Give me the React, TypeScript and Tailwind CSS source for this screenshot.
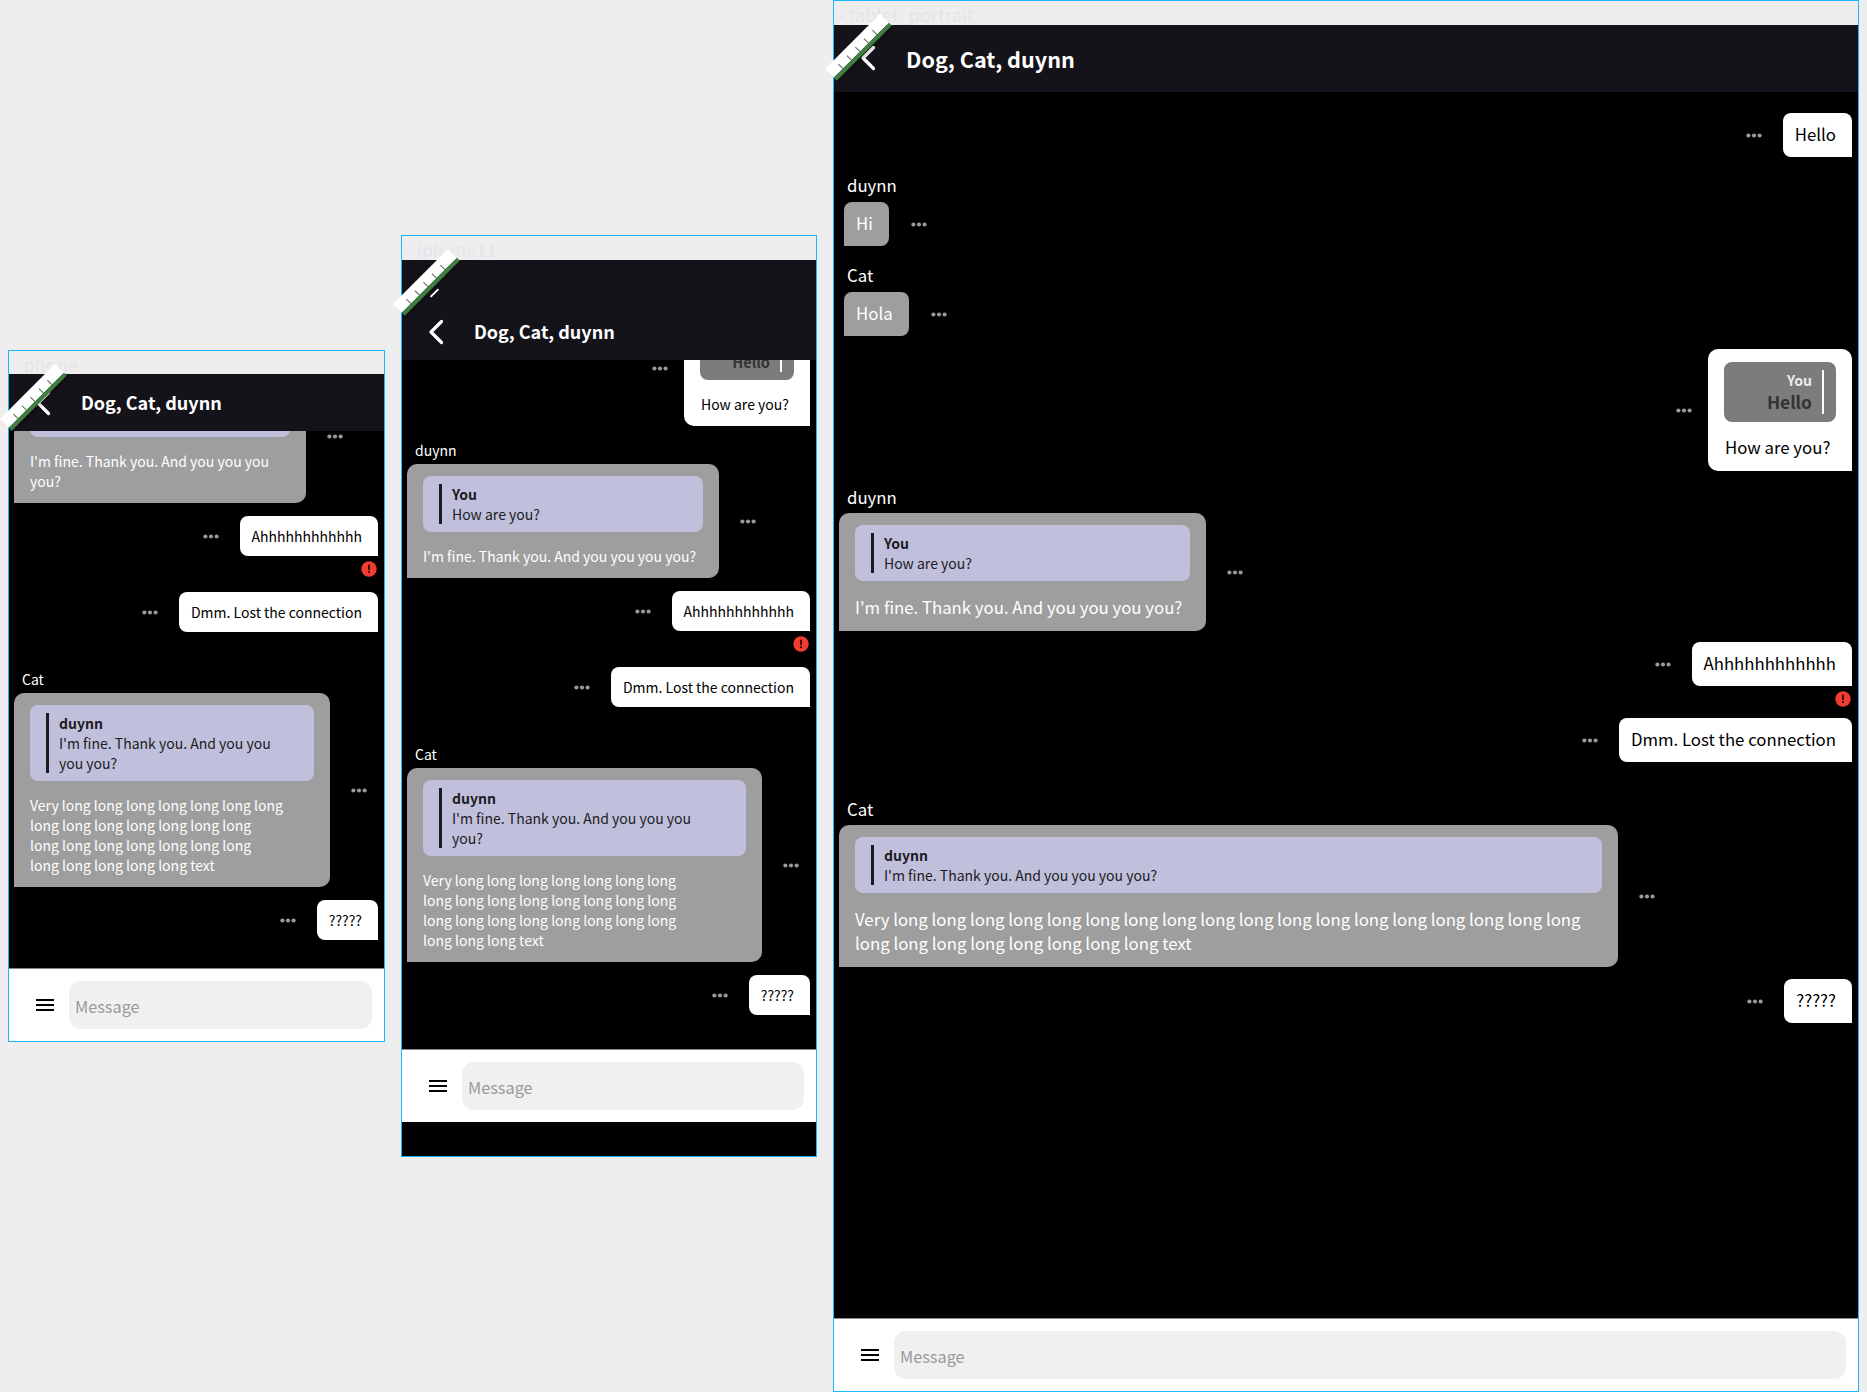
import React from "react";

const Dots = ({ className = "" }: { className?: string }) => (
  <svg width="16" height="5" viewBox="0 0 16 5" className={`shrink-0 ${className}`}>
    <circle cx="2.4" cy="2.5" r="2.1" fill="#999999" />
    <circle cx="8" cy="2.5" r="2.1" fill="#999999" />
    <circle cx="13.6" cy="2.5" r="2.1" fill="#999999" />
  </svg>
);

const ErrorIcon = () => (
  <svg width="16" height="16" viewBox="0 0 16 16" className="block">
    <circle cx="8" cy="8" r="7.7" fill="#f23c2f" />
    <rect x="7" y="3.6" width="2" height="5.6" rx="0.8" fill="#3a0a08" />
    <circle cx="8" cy="11.2" r="1.1" fill="#3a0a08" />
  </svg>
);

const Ruler = () => (
  <svg width="80" height="70" viewBox="0 0 80 70" className="absolute left-[-9px] top-[12px] z-10 overflow-visible">
    <g transform="translate(0 56) rotate(-45)">
      <rect x="0" y="2" width="78" height="18" fill="#000000" opacity="0.12" />
      <rect x="0" y="0" width="78" height="12.5" fill="#ffffff" />
      <rect x="0" y="12.5" width="78" height="4" fill="#3f7f3f" />
      {[13, 25, 37, 49, 61].map((x) => (
        <line key={x} x1={x} y1="6" x2={x} y2="12.5" stroke="#5b6b5b" strokeWidth="1" />
      ))}
    </g>
  </svg>
);

const bodyText = (large: boolean) =>
  large ? "text-[16.8px] leading-[24px]" : "text-[14px] leading-[20px]";

function Label({ name, large, className }: { name: string; large: boolean; className: string }) {
  return <div className={`shrink-0 pl-[8px] text-white ${bodyText(large)} ${className}`}>{name}</div>;
}

function Quote({ name, text, textWidth }: { name: string; text: string; textWidth: string }) {
  return (
    <div className="rounded-[8px] bg-[#c0c0dc] py-[8px] pl-[16px] pr-[8px] text-[14px] leading-[20px] text-[#1c1b22]">
      <div className="border-l-[3px] border-[#1c1b22] pl-[10px]">
        <div className="font-bold">{name}</div>
        <div className={textWidth}>{text}</div>
      </div>
    </div>
  );
}

function OwnMessage({
  className,
  large,
  children,
}: {
  className: string;
  large: boolean;
  children: React.ReactNode;
}) {
  return (
    <div className={`flex shrink-0 items-center justify-end ${className}`}>
      <Dots className="mr-[21px]" />
      <div
        className={`rounded-[8px] rounded-br-none bg-white pl-[12px] pr-[16px] text-black ${
          large ? "pt-[9px] pb-[11px]" : "py-[10px]"
        } ${bodyText(large)}`}
      >
        {children}
      </div>
    </div>
  );
}

function OtherMessage({ large, text }: { large: boolean; text: string }) {
  return (
    <div className="ml-[5px] flex shrink-0 items-center">
      <div
        className={`rounded-[8px] rounded-bl-none bg-[#9e9e9e] pl-[12px] pr-[16px] text-white ${
          large ? "pt-[9px] pb-[11px]" : "py-[10px]"
        } ${bodyText(large)}`}
      >
        {text}
      </div>
      <Dots className="ml-[22px]" />
    </div>
  );
}

function ReplyMessage({
  bubble,
  quoteName,
  quoteText,
  quoteWidth,
  text,
  textWidth,
  large,
}: {
  bubble: string;
  quoteName: string;
  quoteText: string;
  quoteWidth: string;
  text: string;
  textWidth: string;
  large: boolean;
}) {
  return (
    <div className="flex shrink-0 items-center">
      <div className={`rounded-[10px] rounded-bl-none bg-[#9e9e9e] px-[16px] pt-[12px] pb-[12px] text-white ${bubble}`}>
        <Quote name={quoteName} text={quoteText} textWidth={quoteWidth} />
        <div className={`mt-[14px] whitespace-pre-line ${textWidth} ${bodyText(large)}`}>{text}</div>
      </div>
      <Dots className="ml-[21px]" />
    </div>
  );
}

const LONG =
  "Very long long long long long long long long long long long long long long long long long long long long long long long long long long text";
const LONG_PHONE =
  "Very long long long long long long long\nlong long long long long long long\nlong long long long long long long\nlong long long long long text";

function Messages({ device }: { device: "phone" | "iphone" | "tablet" }) {
  const large = device === "tablet";
  return (
    <>
      <OwnMessage large={large} className="mt-0">
        Hello
      </OwnMessage>
      <Label name="duynn" large={large} className={large ? "mt-[16px] mb-[5px]" : "mt-[14px] mb-[4px]"} />
      <OtherMessage large={large} text="Hi" />
      <Label name="Cat" large={large} className={large ? "mt-[17px] mb-[5px]" : "mt-[14px] mb-[4px]"} />
      <OtherMessage large={large} text="Hola" />

      <div className="mt-[13px] flex shrink-0 items-center justify-end">
        <Dots className="mr-[16px]" />
        <div className={`rounded-[10px] rounded-br-none bg-white px-[16px] pt-[13px] pb-[12px] text-black ${large ? "w-[144px]" : "w-[126px]"}`}>
          <div className="flex justify-end rounded-[8px] bg-[#7c7c7c] py-[8px] pr-[12px] text-right">
            <div className="border-r-[2px] border-white pr-[10px]">
              <div className="text-[14px] font-bold leading-[20px] text-[#ececec]">You</div>
              <div
                className={`font-bold text-[#333333] ${
                  large ? "text-[17.4px] leading-[24px]" : "text-[14.6px] leading-[20px]"
                }`}
              >
                Hello
              </div>
            </div>
          </div>
          <div className={`ml-[1px] whitespace-nowrap ${large ? "mt-[13px]" : "mt-[14px]"} ${bodyText(large)}`}>
            How are you?
          </div>
        </div>
      </div>

      <Label name="duynn" large={large} className="mt-[14px] mb-[4px]" />
      <ReplyMessage
        large={large}
        bubble={device === "phone" ? "w-[292px]" : device === "iphone" ? "w-[312px]" : "w-[367px]"}
        quoteName="You"
        quoteText="How are you?"
        quoteWidth=""
        text="I'm fine. Thank you. And you you you you?"
        textWidth={device === "phone" ? "max-w-[260px]" : ""}
      />

      <OwnMessage large={large} className={large ? "mt-[11px]" : "mt-[13px]"}>
        Ahhhhhhhhhhhh
      </OwnMessage>
      <div className="mt-[5px] flex shrink-0 justify-end pr-[1px]">
        <ErrorIcon />
      </div>
      <OwnMessage large={large} className={large ? "mt-[11px]" : "mt-[15px]"}>
        Dmm. Lost the connection
      </OwnMessage>

      <Label name="Cat" large={large} className={large ? "mt-[35px] mb-[4px]" : "mt-[37px] mb-[4px]"} />
      <ReplyMessage
        large={large}
        bubble={device === "phone" ? "w-[316px]" : device === "iphone" ? "w-[355px]" : "w-[779px]"}
        quoteName="duynn"
        quoteText="I'm fine. Thank you. And you you you you?"
        quoteWidth={device === "phone" ? "max-w-[235px]" : device === "iphone" ? "max-w-[260px]" : ""}
        text={device === "phone" ? LONG_PHONE : LONG}
        textWidth={device === "iphone" ? "max-w-[280px]" : ""}
      />

      <OwnMessage large={large} className={large ? "mt-[12px]" : "mt-[13px]"}>
        ?????
      </OwnMessage>
    </>
  );
}

function Device({
  device,
  label,
  frame,
  labelRow,
  header,
  chat,
  bottom,
}: {
  device: "phone" | "iphone" | "tablet";
  label: string;
  frame: string;
  labelRow: string;
  header: string;
  chat: string;
  bottom?: boolean;
}) {
  const tablet = device === "tablet";
  return (
    <div className={`relative flex shrink-0 flex-col border border-[#1eb4ff] bg-black ${frame}`}>
      <div className={`shrink-0 overflow-hidden bg-[#eeeeee] pl-[4px] text-[18.3px] leading-[26px] text-[#e6e3ea] ${labelRow}`}>
        {label}
      </div>
      <div className={`flex shrink-0 items-end bg-[#15131a] ${header}`}>
        <div className={`flex w-full items-center ${tablet ? "h-[66px]" : "h-[57px]"}`}>
          <svg
            width="16"
            height="26"
            viewBox="0 0 16 26"
            className={`ml-[26px] shrink-0 ${tablet ? "-mt-[2px]" : ""}`}
            fill="none"
          >
            <path d="M13.5 2.5 3 13l10.5 10.5" stroke="#ffffff" strokeWidth="3.2" strokeLinecap="round" strokeLinejoin="round" />
          </svg>
          <div className={`ml-[30px] font-bold text-white ${tablet ? "text-[21.6px]" : "text-[18px]"}`}>
            Dog, Cat, duynn
          </div>
        </div>
      </div>
      {device === "iphone" && (
        <div className="absolute left-[27px] top-[56px] z-0 h-[2px] w-[11px] -rotate-45 bg-white" />
      )}
      <div className={`flex min-h-0 flex-1 flex-col overflow-hidden pl-[5px] pr-[6px] ${chat}`}>
        <Messages device={device} />
      </div>
      <div className="flex h-[73px] shrink-0 items-center border-t border-[#888888] bg-white pr-[12px]">
        <div className="ml-[27px] flex w-[18px] shrink-0 flex-col gap-[3px]">
          <div className="h-[2px] bg-black" />
          <div className="h-[2px] bg-black" />
          <div className="h-[2px] bg-black" />
        </div>
        <input
          readOnly
          placeholder="Message"
          className="ml-[15px] h-[48px] min-w-0 flex-1 rounded-[12px] bg-[#f0f0f0] pl-[6px] pt-[2px] text-[16.3px] outline-none placeholder:text-[#999999]"
        />
      </div>
      {bottom && <div className="h-[34px] shrink-0 bg-black" />}
      <Ruler />
    </div>
  );
}

export default function App() {
  return (
    <div className="flex h-[1392px] w-[1867px] items-start gap-[16px] overflow-hidden bg-[#eeeeee] pl-[8px] font-['Noto_Sans_CJK_JP','Noto_Sans',sans-serif]">
      <Device
        device="phone"
        label="- phone"
        frame="mt-[350px] h-[692px] w-[377px]"
        labelRow="h-[23px]"
        header="h-[57px]"
        chat="justify-end pb-[28px]"
      />
      <Device
        device="iphone"
        label="- iphone11"
        frame="mt-[235px] h-[922px] w-[416px]"
        labelRow="h-[24px]"
        header="h-[100px]"
        chat="justify-end pb-[34px]"
        bottom
      />
      <Device
        device="tablet"
        label="- tablet_portrait"
        frame="h-[1392px] w-[1026px]"
        labelRow="h-[24px]"
        header="h-[67px]"
        chat="justify-start pt-[21px]"
      />
    </div>
  );
}
